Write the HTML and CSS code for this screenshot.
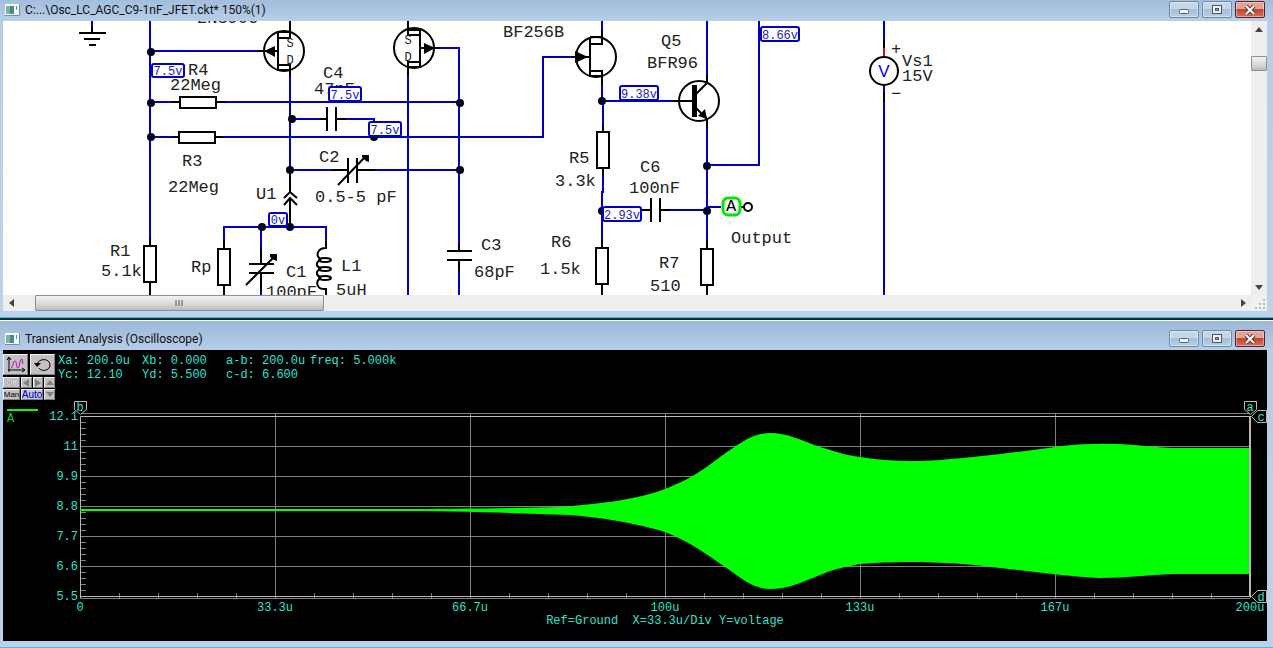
FILE: index.html
```
<!DOCTYPE html>
<html lang="en">
<head>
    <meta charset="UTF-8">
    <title>Transient Analysis (Oscilloscope)</title>
    <meta name="viewport" content="width=device-width, initial-scale=1.0">
    <link rel="stylesheet" href="styles.css">
</head>
<body>
    <!-- Schematic window -->
    <section class="window">
        <header class="titlebar">
            <svg class="app-icon" width="15" height="12" viewBox="0 0 15 12">
                <rect x="0" y="0" width="15" height="12" fill="#f4f8fb"/>
                <rect x="1" y="2" width="8" height="8" fill="#4d8c86"/>
                <rect x="1" y="2" width="4" height="8" fill="#7fb0a0"/>
                <rect x="11" y="2" width="1" height="4" fill="#6a8fa8"/>
                <path d="M0 11.500H14.500V0" fill="none" stroke="#7d8c9c"/>
            </svg>
            <h1>C:...\Osc_LC_AGC_C9-1nF_JFET.ckt* 150%(1)</h1>
            <div class="window-buttons">
                <button type="button" aria-label="Minimize"><svg width="12" height="10"><rect x="1.500" y="4.500" width="9" height="4" rx="1" fill="#f4f4f4" stroke="#5a6470"/></svg></button>
                <button type="button" aria-label="Maximize"><svg width="12" height="10"><rect x="1.500" y="0.500" width="9" height="8" fill="#f4f4f4" stroke="#4a5560"/><rect x="4.500" y="3.500" width="3" height="2" fill="#8fb0cf" stroke="#4a5560"/></svg></button>
                <button type="button" class="close" aria-label="Close"><svg width="12" height="10"><path d="M2 1L10 9M10 1L2 9" stroke="#5a3a3a" stroke-width="4"/><path d="M2 1L10 9M10 1L2 9" stroke="#fff" stroke-width="2"/></svg></button>
            </div>
        </header>
        <div class="sheet">
            <svg class="schematic" viewBox="3 21 1248 274">
                <!-- Wires -->
                <g class="wire">
                    <path d="M92 21V28M150 21V240M150 51H258M290 74V172M150 102H172M225 102H460"/>
                    <path d="M150 137H172M223 137H543V57H572"/>
                    <path d="M290 119H320M346 119H374V137M408 74V295M440 48H459V245M459 270V295"/>
                    <path d="M290 170H332M375 170H459M224 242V227H326V242M261 227V250M261 290V295"/>
                    <path d="M602 21V32M602 84V101M603 101V125M603 176V192H602V240M602 101H672"/>
                    <path d="M707 21V74M707 127V241M707 165H759V21M669 210H707M707 207H721"/>
                    <path d="M884 21V40M884 85V93M884 102V295"/>
                </g>
                <path class="red" d="M884 48V57"/>
                <!-- Leads and symbols -->
                <g class="part">
                    <path d="M92 27V33M79 33H106M84 39H100M89 45H96"/>
                    <path d="M150 239V246M150 283V295M172 102H179M217 102H225M172 137H178M216 137H223"/>
                    <rect x="144" y="246" width="12" height="36"/>
                    <rect x="180" y="97" width="36" height="11"/>
                    <rect x="179" y="132" width="36" height="11"/>
                    <circle cx="284" cy="51" r="20"/>
                    <path d="M258 51H278M278 31V71M290 21V38H278M278 32H290M278 65H290V76M278 70H290"/>
                    <circle cx="414" cy="48" r="20"/>
                    <path d="M440 48H420M420 28V68M408 21V35H420M408 30H420M420 62H408V76M420 67H408"/>
                    <path d="M320 119H327M327 107V131M336 107V131M336 119H346"/>
                    <path d="M332 170H348M348 158V183M357 158V183M357 170H375M338 185L365 157"/>
                    <path d="M290 170V192M290 198V227M284 198L290 192L297 198M284 205L290 198L297 205"/>
                    <path d="M224 241V249M224 286V295"/>
                    <rect x="218" y="249" width="12" height="36"/>
                    <path d="M261 249V264M249 264H274M249 273H274M261 273V291M246 285L273 258"/>
                    <path d="M326 241V248C317 248 315 257 321 259M321 260C315 262 316 267 321 268M321 269C315 271 316 276 321 277M321 278C315 281 316 290 326 289V295"/>
                    <ellipse cx="325" cy="260" rx="6" ry="2"/>
                    <ellipse cx="325" cy="269" rx="6" ry="2"/>
                    <ellipse cx="325" cy="278" rx="6" ry="2"/>
                    <path d="M459 244V251M447 251H472M447 260H472M459 260V271"/>
                    <circle cx="596" cy="57" r="20"/>
                    <path d="M571 57H590M590 37V77M602 31V44H590M590 37H602M590 71H602V85M590 76H602"/>
                    <path d="M603 125V132M603 168V176M602 240V248M602 285V295M707 241V249M707 286V295"/>
                    <rect x="597" y="132" width="12" height="36"/>
                    <rect x="596" y="248" width="12" height="36"/>
                    <rect x="701" y="249" width="12" height="36"/>
                    <circle cx="699" cy="101" r="20"/>
                    <path d="M672 101H694M696 94L707 83V74M696 108L707 119V128"/>
                    <path d="M641 210H651M651 198V222M660 198V222M660 210H670M741 207H744"/>
                    <circle cx="748" cy="207" r="4"/>
                    <circle cx="884" cy="71" r="14"/>
                    <path d="M884 40V48M884 93V102"/>
                </g>
                <!-- Arrow heads -->
                <g>
                    <path d="M264 51L275 46V57Z"/>
                    <path d="M435 48L424 43V54Z"/>
                    <path d="M588 57L575 51V63Z"/>
                    <path d="M707 119L698 116L705 109Z"/>
                    <rect x="692" y="85" width="5" height="32"/>
                    <path d="M362 155H369V162L366 161L362 157Z"/>
                    <path d="M270 254H277V261L274 260L270 257Z"/>
                </g>
                <!-- Junctions -->
                <g class="node">
                    <circle cx="151" cy="52" r="4"/>
                    <circle cx="151" cy="103" r="4"/>
                    <circle cx="151" cy="137" r="4"/>
                    <circle cx="292" cy="119" r="4"/>
                    <circle cx="374" cy="137" r="4"/>
                    <circle cx="460" cy="103" r="4"/>
                    <circle cx="460" cy="170" r="4"/>
                    <circle cx="290" cy="170" r="4"/>
                    <circle cx="262" cy="227" r="4"/>
                    <circle cx="290" cy="227" r="4"/>
                    <circle cx="602" cy="101" r="4"/>
                    <circle cx="602" cy="211" r="4"/>
                    <circle cx="707" cy="166" r="4"/>
                    <circle cx="707" cy="211" r="4"/>
                </g>
                <!-- Names and values -->
                <g class="label">
                    <text x="197" y="23">2N3906</text>
                    <text x="188" y="75">R4</text>
                    <text x="170" y="90">22Meg</text>
                    <text x="182" y="166">R3</text>
                    <text x="168" y="192">22Meg</text>
                    <text x="110" y="256">R1</text>
                    <text x="101" y="276">5.1k</text>
                    <text x="191" y="272">Rp</text>
                    <text x="256" y="199">U1</text>
                    <text x="323" y="78">C4</text>
                    <text x="314" y="94">47nF</text>
                    <text x="319" y="162">C2</text>
                    <text x="315" y="202">0.5-5 pF</text>
                    <text x="286" y="277">C1</text>
                    <text x="266" y="297">100pF</text>
                    <text x="341" y="271">L1</text>
                    <text x="336" y="295">5uH</text>
                    <text x="481" y="250">C3</text>
                    <text x="474" y="277">68pF</text>
                    <text x="503" y="37">BF256B</text>
                    <text x="661" y="46">Q5</text>
                    <text x="647" y="68">BFR96</text>
                    <text x="569" y="163">R5</text>
                    <text x="555" y="186">3.3k</text>
                    <text x="640" y="172">C6</text>
                    <text x="629" y="193">100nF</text>
                    <text x="551" y="247">R6</text>
                    <text x="540" y="274">1.5k</text>
                    <text x="659" y="268">R7</text>
                    <text x="650" y="291">510</text>
                    <text x="731" y="243">Output</text>
                    <text x="891" y="54">+</text>
                    <text x="902" y="66">Vs1</text>
                    <text x="902" y="81">15V</text>
                    <text x="891" y="99">−</text>
                </g>
                <g class="pin">
                    <text x="290" y="47">S</text>
                    <text x="290" y="64">D</text>
                    <text x="408" y="44">S</text>
                    <text x="408" y="61">D</text>
                </g>
                <text class="source" x="884" y="77">V</text>
                <!-- Node voltages -->
                <g class="volt">
                    <rect x="152" y="64" width="32" height="13" rx="2"/><text x="168" y="75">7.5v</text>
                    <rect x="329" y="87" width="32" height="14" rx="2"/><text x="345" y="99">7.5v</text>
                    <rect x="369" y="122" width="32" height="14" rx="2"/><text x="385" y="134">7.5v</text>
                    <rect x="269" y="213" width="18" height="13" rx="2"/><text x="278" y="224">0v</text>
                    <rect x="620" y="86" width="38" height="14" rx="2"/><text x="639" y="98">9.38v</text>
                    <rect x="761" y="27" width="38" height="14" rx="2"/><text x="780" y="39">8.66v</text>
                    <rect x="603" y="207" width="38" height="14" rx="2"/><text x="622" y="219">2.93v</text>
                </g>
                <rect class="probe" x="723" y="198" width="17" height="17" rx="5"/>
                <text class="probe-name" x="731" y="211">A</text>
            </svg>
            <div class="scrollbar vertical">
                <button type="button" aria-label="Scroll up"><svg width="8" height="5"><path d="M0 5L4 0L8 5Z" fill="#444"/></svg></button>
                <div class="track"><div class="thumb"></div></div>
                <button type="button" aria-label="Scroll down"><svg width="8" height="5"><path d="M0 0L4 5L8 0Z" fill="#444"/></svg></button>
            </div>
            <div class="scrollbar horizontal">
                <button type="button" aria-label="Scroll left"><svg width="5" height="8"><path d="M5 0L0 4L5 8Z" fill="#444"/></svg></button>
                <div class="track"><div class="thumb"><svg width="9" height="8"><path d="M1 1V7M4 1V7M7 1V7" stroke="#555"/></svg></div></div>
                <button type="button" aria-label="Scroll right"><svg width="5" height="8"><path d="M0 0L5 4L0 8Z" fill="#444"/></svg></button>
            </div>
            <div class="grip">
                <svg width="10" height="10"><path d="M8 0h2v2h-2zM4 4h2v2h-2zM8 4h2v2h-2zM0 8h2v2h-2zM4 8h2v2h-2zM8 8h2v2h-2z" fill="#bcbcbc"/></svg>
            </div>
        </div>
    </section>

    <!-- Oscilloscope window -->
    <section class="window scope-window">
        <header class="titlebar">
            <svg class="app-icon" width="15" height="12" viewBox="0 0 15 12">
                <rect x="0" y="0" width="15" height="12" fill="#f4f8fb"/>
                <rect x="1" y="2" width="8" height="8" fill="#4d8c86"/>
                <rect x="1" y="2" width="4" height="8" fill="#7fb0a0"/>
                <rect x="11" y="2" width="1" height="4" fill="#6a8fa8"/>
                <path d="M0 11.500H14.500V0" fill="none" stroke="#7d8c9c"/>
            </svg>
            <h1>Transient Analysis (Oscilloscope)</h1>
            <div class="window-buttons">
                <button type="button" aria-label="Minimize"><svg width="12" height="10"><rect x="1.500" y="4.500" width="9" height="4" rx="1" fill="#f4f4f4" stroke="#5a6470"/></svg></button>
                <button type="button" aria-label="Maximize"><svg width="12" height="10"><rect x="1.500" y="0.500" width="9" height="8" fill="#f4f4f4" stroke="#4a5560"/><rect x="4.500" y="3.500" width="3" height="2" fill="#8fb0cf" stroke="#4a5560"/></svg></button>
                <button type="button" class="close" aria-label="Close"><svg width="12" height="10"><path d="M2 1L10 9M10 1L2 9" stroke="#5a3a3a" stroke-width="4"/><path d="M2 1L10 9M10 1L2 9" stroke="#fff" stroke-width="2"/></svg></button>
            </div>
        </header>
        <div class="scope">
            <div class="scope-head">
                <div class="tools">
                    <div class="tool-row big">
                        <button type="button" aria-label="Scale axes">
                            <svg width="22" height="18"><path d="M4 16V2M2 4L4 1L6 4M3 14H19M17 12L20 14L17 16" fill="none" stroke="#000"/><path d="M6 12C8 12 8 5 10 5C12 5 11 12 13 12C15 12 14 4 17 3L18 8" fill="none" stroke="#c000c0"/></svg>
                        </button>
                        <button type="button" aria-label="Restart">
                            <svg width="22" height="18"><path d="M5 8C7 2 18 2 18 9C18 15 9 16 7 12" fill="none" stroke="#000"/><path d="M2 7H9L5 11Z"/></svg>
                        </button>
                    </div>
                    <div class="tool-row small">
                        <button type="button" class="off">Off</button>
                        <button type="button" aria-label="Left"><svg width="6" height="8"><path d="M6 0L0 4L6 8Z" fill="#808080"/></svg></button>
                        <button type="button" aria-label="Right"><svg width="6" height="8"><path d="M0 0L6 4L0 8Z" fill="#808080"/></svg></button>
                        <button type="button" aria-label="Up"><svg width="8" height="5"><path d="M0 5L4 0L8 5Z" fill="#808080"/></svg></button>
                    </div>
                    <div class="tool-row small">
                        <button type="button">Man</button>
                        <button type="button" class="auto">Auto</button>
                        <button type="button" aria-label="Down"><svg width="8" height="5"><path d="M0 0L4 5L8 0Z" fill="#808080"/></svg></button>
                    </div>
                </div>
                <div class="readouts">
                    <span>Xa: 200.0u</span><span>Xb: 0.000</span><span>a-b: 200.0u</span><span>freq: 5.000k</span>
                    <span>Yc: 12.10</span><span>Yd: 5.500</span><span>c-d: 6.600</span>
                </div>
            </div>
            <svg class="plot" viewBox="3 400 1264 241">
                <!-- Trace legend -->
                <path d="M7 410H38" stroke="#00ff00" stroke-width="2"/>
                <text class="trace-name" x="7" y="422">A</text>
                <!-- Grid -->
                <g class="grid">
                    <path d="M80 413.500H1250M80 446.500H1250M80 476.500H1250M80 506.500H1250M80 536.500H1250M80 566.500H1250M80 598.500H1250"/>
                    <path d="M275.500 413V598M470.500 413V598M665.500 413V598M860.500 413V598M1055.500 413V598"/>
                </g>
                <path class="ticks-y" d="M83.500 416V597"/>
                <path class="ticks-x" d="M80 595.500H1251"/>
                <path class="axis" d="M80.500 598V416.500H1251M80 596.500H1251"/>
                <!-- Signal envelope -->
                <path class="trace" d="M80 509H390C460 509 520 508 560 507C600 504 640 499 665 489C690 479 700 472 720 457C740 443 752 433 770 433C788 433 800 440 820 447C840 453 850 456 860 457C885 461 910 462 940 460C980 457 1010 453 1055 447C1080 443 1110 443 1135 445C1155 447 1165 448 1180 448H1250V574H1175C1145 575 1125 578 1100 578C1070 577 1030 571 1000 568C960 562 900 560 860 564C840 568 835 569 820 575C800 583 788 589 770 589C752 589 740 577 725 567C705 553 690 542 665 532C640 524 600 517 570 515C510 513 460 511 390 511H80Z"/>
                <path d="M1250 416V597" stroke="#b8b8b0" stroke-width="2"/>
                <!-- Cursors -->
                <g class="cursor">
                    <path d="M80.500 414.500L74.500 409.500V401.500H86.500V409.500Z"/>
                    <path d="M1250.500 414.500L1244.500 409.500V401.500H1256.500V409.500Z"/>
                    <path d="M1251.500 416.500L1257.500 410.500H1266.500V422.500H1257.500Z"/>
                    <path d="M1251.500 596.500L1257.500 590.500H1266.500V602.500H1257.500Z"/>
                </g>
                <g class="tick-label middle">
                    <text x="80" y="411">b</text>
                    <text x="1250" y="411">a</text>
                    <text x="1261" y="421">c</text>
                    <text x="1261" y="601">d</text>
                    <text x="80" y="611">0</text>
                    <text x="275" y="611">33.3u</text>
                    <text x="470" y="611">66.7u</text>
                    <text x="665" y="611">100u</text>
                    <text x="860" y="611">133u</text>
                    <text x="1055" y="611">167u</text>
                    <text x="1250" y="611">200u</text>
                    <text x="665" y="624" xml:space="preserve">Ref=Ground  X=33.3u/Div Y=voltage</text>
                </g>
                <g class="tick-label end">
                    <text x="78" y="420">12.1</text>
                    <text x="78" y="450">11</text>
                    <text x="78" y="480">9.9</text>
                    <text x="78" y="510">8.8</text>
                    <text x="78" y="540">7.7</text>
                    <text x="78" y="570">6.6</text>
                    <text x="78" y="600">5.5</text>
                </g>
            </svg>
        </div>
    </section>
</body>
</html>
```
FILE: styles.css
```
* {
    box-sizing: border-box;
    margin: 0;
    padding: 0;
}
body {
    font-family: Roboto, "Open Sans", sans-serif;
    background-color: #bcd2ec;
}
button {
    border: none;
    cursor: pointer;
    display: flex;
    align-items: center;
    justify-content: center;
}
/* Windows */
.window {
    padding: 0 6px 6px 3px;
    background: linear-gradient(#a3bedc, #b6cee8 21px, #bcd2ec);
    border-bottom: 1px solid #3fc4dc;
}
.scope-window {
    margin-top: 3px;
    background: linear-gradient(#9cb8d8, #b6cde8 29px, #bcd2ec);
    box-shadow: 0 -1px #fff, 0 -3px #0b2c34;
}
.titlebar {
    display: flex;
    align-items: center;
    height: 21px;
    padding: 0 2px 2px;
}
.scope-window .titlebar {
    height: 29px;
    padding: 6px 2px 0;
}
.app-icon {
    margin-right: 5px;
}
.titlebar h1 {
    font-size: 12px;
    line-height: 16px;
    font-weight: 400;
    color: #111;
    white-space: nowrap;
}
.window-buttons {
    display: flex;
    gap: 3px;
    margin-left: auto;
}
.window-buttons button {
    width: 30px;
    height: 17px;
    border: 1px solid #7088a4;
    border-radius: 2px;
    background: linear-gradient(#c3d6ea 45%, #a4bfdb 50%, #b7d0e8);
    box-shadow: inset 0 0 0 1px rgba(255, 255, 255, 0.4);
}
.window-buttons .close {
    border-color: #5c2026;
    background: linear-gradient(#e3a294 45%, #c4432c 50%, #d5705a);
}
/* Schematic */
.sheet {
    display: grid;
    grid-template-columns: 1fr 16px;
    grid-template-rows: auto 16px;
    background-color: #fff;
}
.schematic,
.plot {
    display: block;
    width: 100%;
    height: auto;
}
.schematic text,
.plot text {
    font-family: "Liberation Mono", monospace;
}
.wire {
    fill: none;
    stroke: #0000c0;
    stroke-width: 2;
}
.red {
    stroke: #d01020;
    stroke-width: 2;
}
.part {
    fill: none;
    stroke: #000;
    stroke-width: 2;
}
.node {
    fill: #00001c;
}
.label {
    font-size: 17px;
    fill: #222;
}
.pin {
    font-size: 12px;
    fill: #222;
    text-anchor: middle;
}
.schematic .source {
    font-family: "Liberation Sans", sans-serif;
    font-size: 17px;
    fill: #0000e0;
    text-anchor: middle;
}
.volt {
    font-size: 12px;
    fill: #1c1cb0;
    text-anchor: middle;
}
.volt rect {
    fill: #fff;
    stroke: #0000c8;
    stroke-width: 2;
}
.probe {
    fill: #fff;
    stroke: #00e800;
    stroke-width: 3;
}
.probe-name {
    font-size: 17px;
    text-anchor: middle;
}
/* Scrollbars */
.scrollbar {
    display: flex;
    background-color: #eee;
}
.scrollbar button {
    width: 16px;
    height: 16px;
    background: none;
}
.scrollbar .track {
    flex: 1;
}
.scrollbar .thumb {
    display: flex;
    align-items: center;
    justify-content: center;
    border: 1px solid #909090;
    border-radius: 1px;
    background: linear-gradient(#f2f2f2, #dcdcdc 50%, #bcbcbc);
}
.vertical {
    flex-direction: column;
}
.vertical .thumb {
    height: 15px;
    margin-top: 19px;
}
.horizontal .thumb {
    width: 289px;
    height: 16px;
    margin-left: 16px;
}
.grip {
    display: flex;
    align-items: flex-end;
    justify-content: flex-end;
    padding: 2px;
    background-color: #f0f0f0;
}
/* Oscilloscope */
.scope {
    background-color: #000;
}
.scope-head {
    display: flex;
    gap: 3px;
    padding-top: 4px;
}
.tools {
    width: 52px;
}
.tool-row {
    display: flex;
    gap: 1px;
}
.tool-row button {
    background-color: #c4c0c4;
    border: 1px solid;
    border-color: #f0f0f0 #808080 #808080 #f0f0f0;
}
.big {
    gap: 2px;
    margin-bottom: 2px;
}
.big button {
    width: 25px;
    height: 21px;
}
.small button {
    flex: 1;
    height: 11px;
    overflow: hidden;
    font-family: "Liberation Sans", sans-serif;
    font-size: 8px;
    line-height: 9px;
}
.small + .small {
    margin-top: 1px;
}
.small button:first-child {
    flex: none;
    width: 17px;
}
.small button:last-child {
    flex: none;
    width: 11px;
}
.small .off {
    color: #fff;
    text-shadow: 0 0 1px #333;
}
.small .auto {
    font-size: 10px;
    color: #0000c0;
    background-color: #c4c4e4;
}
.readouts {
    display: grid;
    grid-template-columns: repeat(3, 84px) auto;
    align-content: start;
    font-family: "Liberation Mono", monospace;
    font-size: 12px;
    line-height: 14px;
    color: #30e0d0;
    white-space: nowrap;
}
/* Plot */
.trace {
    fill: #00ff00;
}
.grid,
.axis,
.cursor,
.ticks-x,
.ticks-y {
    fill: none;
    stroke: #808080;
}
.axis {
    stroke: #b8b8b0;
}
.ticks-x {
    stroke-width: 5;
    stroke-dasharray: 1 38;
}
.ticks-y {
    stroke-width: 5;
    stroke-dasharray: 1 5;
}
.cursor {
    fill: #000;
    stroke: #c0b8b8;
}
.trace-name {
    font-size: 12px;
    fill: #20d020;
}
.tick-label {
    font-size: 12px;
    fill: #30e0d0;
}
.middle {
    text-anchor: middle;
}
.end {
    text-anchor: end;
}
```
